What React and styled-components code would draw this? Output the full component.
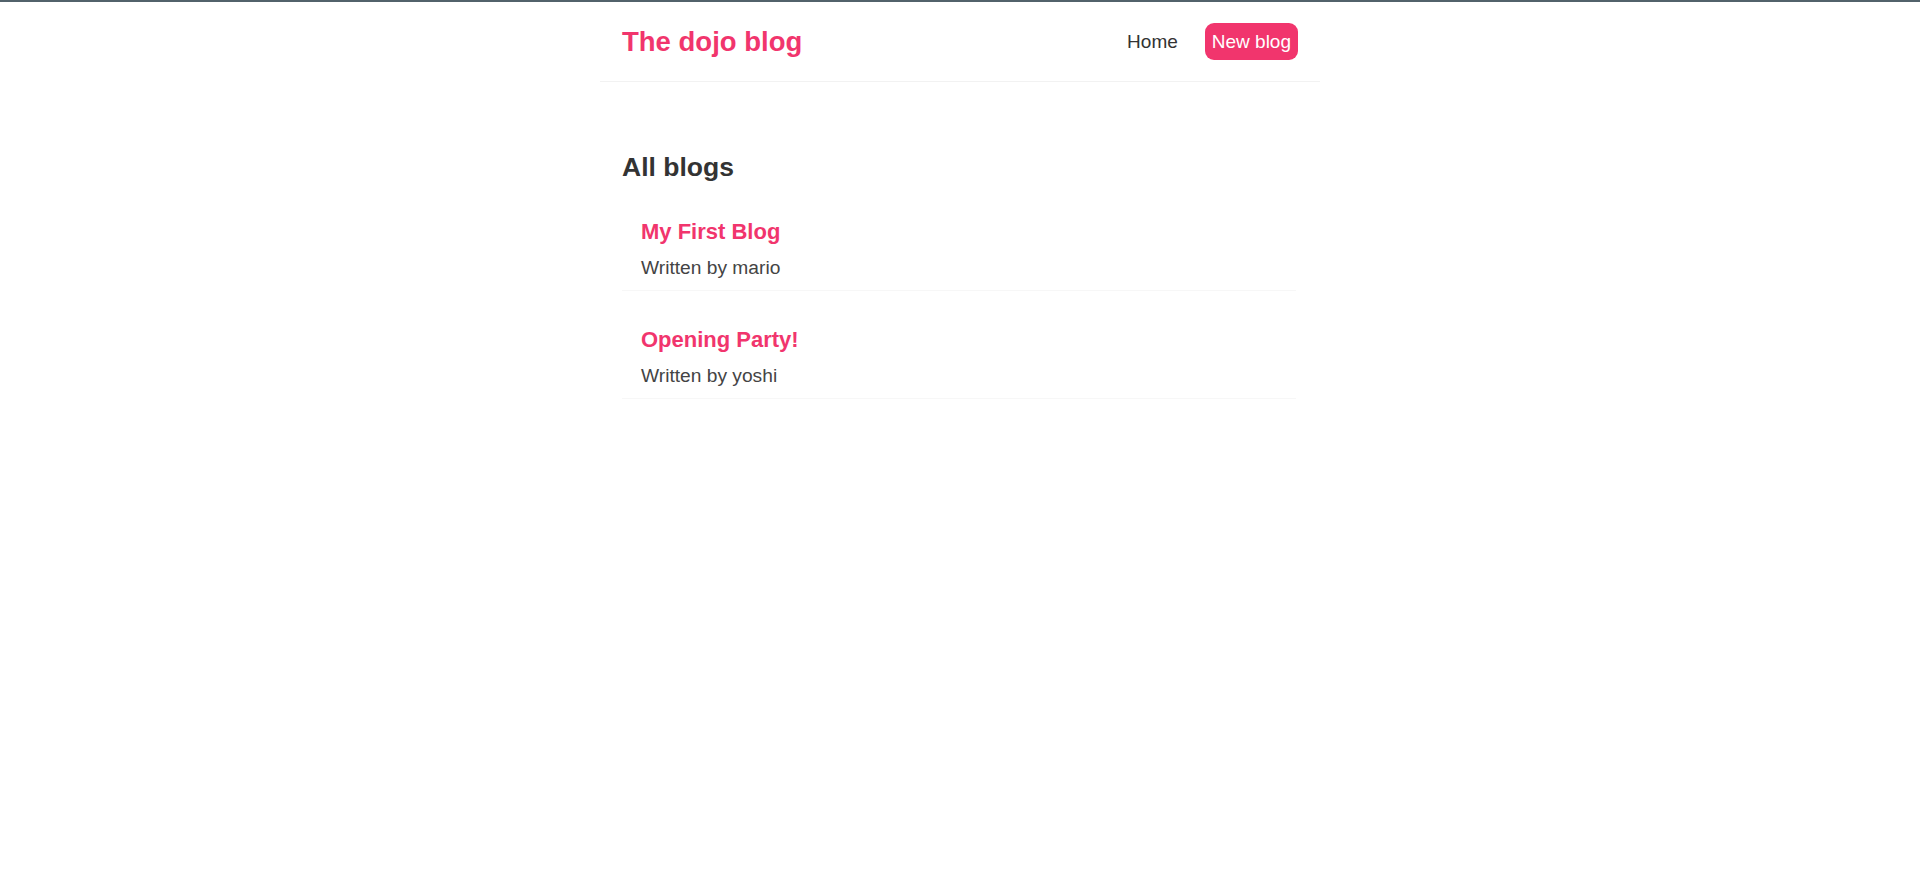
import React from "react";
import styled, { createGlobalStyle } from "styled-components";

const GlobalStyle = createGlobalStyle`
  * { box-sizing: border-box; }
  html, body { margin: 0; padding: 0; background: #ffffff; }
  body {
    font-family: "Liberation Sans", Arial, sans-serif;
    color: #333333;
    border-top: 2px solid #52626b;
  }
`;

const Navbar = styled.nav`
  display: flex;
  align-items: center;
  max-width: 720px;
  margin: 0 auto;
  padding: 21px 22px;
  border-bottom: 1px solid #f2f2f2;
`;

const Brand = styled.h1`
  margin: 0;
  font-size: 27.5px;
  line-height: 30px;
  font-weight: 700;
  color: #f1356d;
`;

const Links = styled.div`
  margin-left: auto;
  display: flex;
  align-items: center;
`;

const NavLink = styled.a`
  margin-left: ${(p) => (p.$first ? "0" : "20px")};
  padding: 7px;
  font-size: 19px;
  line-height: 23px;
  text-decoration: none;
  border-radius: 9px;
  color: ${(p) => (p.$primary ? "#ffffff" : "#333333")};
  background: ${(p) => (p.$primary ? "#f1356d" : "transparent")};
  cursor: pointer;
`;

const Content = styled.main`
  max-width: 720px;
  margin: 0 auto;
  padding: 70px 24px 0 22px;
`;

const Heading = styled.h2`
  margin: 0;
  font-size: 26.5px;
  line-height: 30px;
  font-weight: 700;
  color: #333333;
`;

const List = styled.div`
  display: flex;
  flex-direction: column;
  gap: 24px;
  margin-top: 25px;
`;

const Preview = styled.div`
  padding: 12px 19px 11px;
  border-bottom: 1px solid #f7f7f7;
`;

const PreviewTitle = styled.h2`
  margin: 0 0 11px;
  font-size: 22px;
  line-height: 26px;
  font-weight: 700;
  color: #f1356d;
`;

const Author = styled.p`
  margin: 0;
  font-size: 19.2px;
  line-height: 23px;
  color: #444444;
`;

const blogs = [
  { id: 1, title: "My First Blog", author: "mario" },
  { id: 2, title: "Opening Party!", author: "yoshi" },
];

export default function App() {
  return (
    <>
      <GlobalStyle />
      <Navbar>
        <Brand>The dojo blog</Brand>
        <Links>
          <NavLink $first href="#">Home</NavLink>
          <NavLink $primary href="#">New blog</NavLink>
        </Links>
      </Navbar>
      <Content>
        <Heading>All blogs</Heading>
        <List>
          {blogs.map((b) => (
            <Preview key={b.id}>
              <PreviewTitle>{b.title}</PreviewTitle>
              <Author>Written by {b.author}</Author>
            </Preview>
          ))}
        </List>
      </Content>
    </>
  );
}
